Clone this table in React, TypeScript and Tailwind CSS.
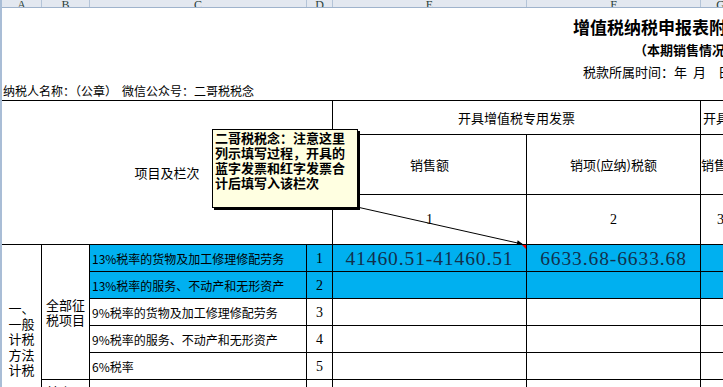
import React from "react";

const rowStart = [
  "row-start-4",
  "row-start-5",
  "row-start-6",
  "row-start-7",
  "row-start-8",
  "row-start-9",
  "row-start-10",
];

const rows = [
  { label: "13%税率的货物及加工修理修配劳务", n: "1", e: "41460.51-41460.51", f: "6633.68-6633.68", blue: true },
  { label: "13%税率的服务、不动产和无形资产", n: "2", e: "", f: "", blue: true },
  { label: "9%税率的货物及加工修理修配劳务", n: "3", e: "", f: "", blue: false },
  { label: "9%税率的服务、不动产和无形资产", n: "4", e: "", f: "", blue: false },
  { label: "6%税率", n: "5", e: "", f: "", blue: false },
  { label: "即征即退货物及加工修理修配劳务", n: "6", e: "", f: "", blue: false },
  { label: "即征即退服务、不动产和无形资产", n: "7", e: "", f: "", blue: false },
];

const cell = "border-r border-b border-black flex items-center justify-center overflow-hidden";

export default function App() {
  return (
    <div className="relative w-[723px] h-[387px] overflow-hidden bg-white border-l-2 border-[#a9bdd6] font-['Noto_Sans_CJK_SC',sans-serif] text-black">
      {/* column letters */}
      <div className="grid w-[739px] h-[8px] grid-cols-[40px_48px_217px_26px_194px_174px_40px] bg-[#e3e8f0] border-b border-[#9fb3cc] overflow-hidden">
        {["A", "B", "C", "D", "E", "F", "G"].map((l) => (
          <div
            key={l}
            className="flex items-end justify-center border-r border-[#b4c4d8] text-[12px] leading-[10px] text-[#2a3f3a] font-['Liberation_Serif',serif]"
          >
            {l}
          </div>
        ))}
      </div>

      {/* title area */}
      <div className="h-[92px] flex flex-col pt-[8px] whitespace-nowrap">
        <div className="h-[22px] flex items-center pl-[571px] text-[17px] leading-[22px] font-bold">
          增值税纳税申报表附列资料（一）
        </div>
        <div className="h-[24px] flex items-center pl-[632px] text-[13px] leading-[24px] font-bold">
          （本期销售情况明细）
        </div>
        <div className="h-[20px] flex items-center pl-[581px] text-[13px] leading-[20px]">
          <span>税款所属时间：</span>
          <span>年</span>
          <span className="ml-[6px]">月</span>
          <span className="ml-[12px]">日</span>
        </div>
        <div className="h-[18px] flex items-center pl-[1px] text-[12px] leading-[18px]">
          <span>纳税人名称：（公章）</span>
          <span className="ml-[5px]">微信公众号：二哥税税念</span>
        </div>
      </div>

      {/* table */}
      <div className="grid w-[739px] border-t border-black grid-cols-[40px_48px_217px_26px_194px_174px_40px] grid-rows-[34px_60px_50px_27px_27px_27px_27px_27px_27px_27px] text-[13px] leading-[15px]">
        <div className={`${cell} col-start-1 col-span-4 row-start-1 row-span-3`}>项目及栏次</div>
        <div className={`${cell} col-start-5 col-span-2 row-start-1`}>开具增值税专用发票</div>
        <div className="border-r border-b border-black flex items-center justify-start pl-[2px] whitespace-nowrap col-start-7 row-start-1">
          开具其他发票
        </div>

        <div className={`${cell} col-start-5 row-start-2`}>销售额</div>
        <div className={`${cell} col-start-6 row-start-2`}>销项(应纳)税额</div>
        <div className={`${cell} col-start-7 row-start-2 whitespace-nowrap`}>销售额</div>

        <div className={`${cell} col-start-5 row-start-3 font-['Liberation_Serif',serif] text-[14px]`}>1</div>
        <div className={`${cell} col-start-6 row-start-3 font-['Liberation_Serif',serif] text-[14px]`}>2</div>
        <div className={`${cell} col-start-7 row-start-3 font-['Liberation_Serif',serif] text-[14px]`}>3</div>

        <div className={`${cell} col-start-1 row-start-4 row-span-7 flex-col leading-[15.5px]`}>
          <div>一、</div>
          <div>一般</div>
          <div>计税</div>
          <div>方法</div>
          <div>计税</div>
        </div>
        <div className={`${cell} col-start-2 row-start-4 row-span-5 flex-col leading-[15px]`}>
          <div>全部征</div>
          <div>税项目</div>
        </div>
        <div className={`${cell} col-start-2 row-start-9 row-span-2 flex-col leading-[15px]`}>
          <div>其中：</div>
          <div>即征即</div>
          <div>退项目</div>
        </div>

        {rows.map((r, i) => {
          const bg = r.blue ? "bg-[#00b0f0]" : "bg-white";
          const rs = rowStart[i];
          return (
            <React.Fragment key={r.n}>
              <div
                className={`border-r border-b border-black flex items-center justify-start pl-[2px] text-[12px] whitespace-nowrap overflow-hidden col-start-3 ${rs} ${bg}`}
              >
                {r.label}
              </div>
              <div className={`${cell} col-start-4 ${rs} ${bg} font-['Liberation_Serif',serif] text-[14px]`}>{r.n}</div>
              <div
                className={`${cell} col-start-5 ${rs} ${bg} font-['Liberation_Serif',serif] text-[19.5px] tracking-[0.9px] text-[#12304d] whitespace-nowrap`}
              >
                {r.e}
              </div>
              <div
                className={`${cell} col-start-6 ${rs} ${bg} font-['Liberation_Serif',serif] text-[19.5px] tracking-[0.9px] text-[#12304d] whitespace-nowrap`}
              >
                {r.f}
              </div>
              <div className={`${cell} col-start-7 ${rs} ${bg}`}></div>
            </React.Fragment>
          );
        })}
      </div>

      {/* comment arrow + marker */}
      <svg className="absolute left-0 top-0 pointer-events-none" width="721" height="387" viewBox="0 0 721 387">
        <polygon points="520,245 524,245 524,249" fill="#ff0000" />
        <line x1="355" y1="207" x2="520" y2="244" stroke="#000" strokeWidth="1" />
        <polygon points="521,244.2 515.7,240.3 514.6,245.1" fill="#000" />
      </svg>

      {/* comment box */}
      <div className="absolute left-[210px] top-[129px] w-[146px] h-[79px] border border-black bg-[#ffffe1] shadow-[2px_2px_0_0_#000] pl-[2px] text-[13px] leading-[15px] font-bold whitespace-nowrap">
        <div>二哥税税念：注意这里</div>
        <div>列示填写过程，开具的</div>
        <div>蓝字发票和红字发票合</div>
        <div>计后填写入该栏次</div>
      </div>
    </div>
  );
}
